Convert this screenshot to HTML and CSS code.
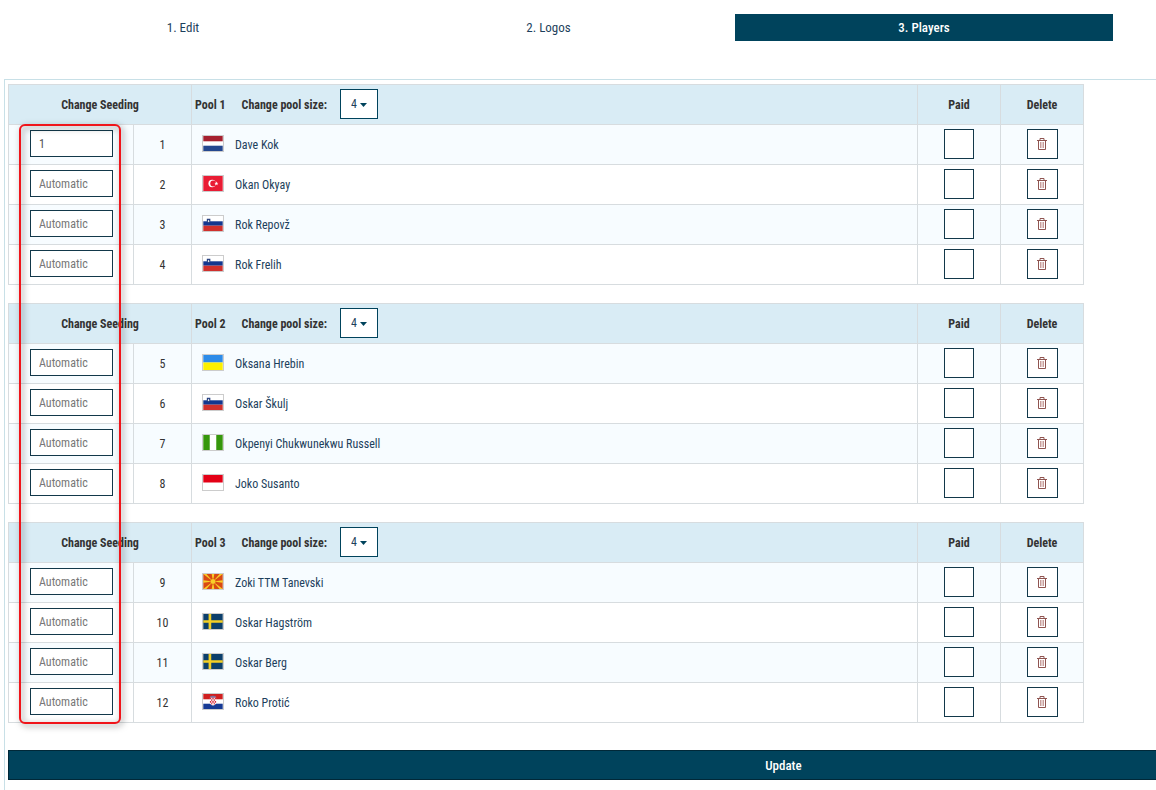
FILE: index.html
```html
<!DOCTYPE html>
<html lang="en">
<head>
<meta charset="utf-8">
<title>Players</title>
<link rel="stylesheet" href="styles.css">
</head>
<body>
<svg class="sprite" aria-hidden="true">
  <symbol id="nl" viewBox="0 0 22 17"><path fill="#fff" d="M0 0h22v17H0z"/><path fill="#a5202f" d="M0 0h22v6H0z"/><path fill="#24478f" d="M0 11h22v6H0z"/></symbol>
  <symbol id="tr" viewBox="0 0 22 17"><path fill="#e91c34" d="M0 0h22v17H0z"/><circle cx="10" cy="8.500" r="4.200" fill="#fff"/><circle cx="11.200" cy="8.500" r="3.300" fill="#e91c34"/><path fill="#fff" d="M14.800 6.200l.7 1.500 1.600.1-1.300 1 .5 1.600-1.500-.9-1.500.9.5-1.600-1.200-1 1.600-.1z"/></symbol>
  <symbol id="si" viewBox="0 0 22 17"><path fill="#fff" d="M0 0h22v17H0z"/><path fill="#12378f" d="M0 6h22v5H0z"/><path fill="#d0302c" d="M0 11h22v6H0z"/><path fill="#26407f" d="M4 3h4v3c0 1.500-1 2-2 2.500C5 8 4 7.500 4 6z"/><path fill="#fff" d="M5 6l1-1.800L7 6 6 7z"/></symbol>
  <symbol id="ua" viewBox="0 0 22 17"><path fill="#2d8be8" d="M0 0h22v8.500H0z"/><path fill="#fcf000" d="M0 8.500h22V17H0z"/></symbol>
  <symbol id="ng" viewBox="0 0 22 17"><path fill="#fff" d="M0 0h22v17H0z"/><path fill="#36970c" d="M0 0h7.300v17H0zM14.700 0H22v17h-7.300z"/></symbol>
  <symbol id="id" viewBox="0 0 22 17"><path fill="#fff" d="M0 0h22v17H0z"/><path fill="#e30016" d="M0 0h22v8.500H0z"/></symbol>
  <symbol id="mk" viewBox="0 0 22 17"><path fill="#d94a12" d="M0 0h22v17H0z"/><path fill="#f8cf28" d="M0 0h3.500L11 8.500zM22 0h-3.500L11 8.500zM0 17h3.500L11 8.500zM22 17h-3.500L11 8.500zM9.500 0h3L11 8.500zM9.500 17h3L11 8.500zM0 7v3l11-1.500zM22 7v3l-11-1.500z"/><circle cx="11" cy="8.500" r="3.200" fill="#f8cf28" stroke="#d94a12" stroke-width=".6"/></symbol>
  <symbol id="se" viewBox="0 0 22 17"><path fill="#0c3f6b" d="M0 0h22v17H0z"/><path fill="#f3cf25" d="M6 0h3v7h13v3H9v7H6v-7H0V7h6z"/></symbol>
  <symbol id="hr" viewBox="0 0 22 17"><path fill="#fff" d="M0 0h22v17H0z"/><path fill="#cf2020" d="M0 0h22v6H0z"/><path fill="#173a94" d="M0 11h22v6H0z"/><path fill="#fff" d="M7.500 4h7v5.500c0 2-1.500 3-3.500 3.500-2-.5-3.500-1.500-3.500-3.500z"/><path fill="#d6293a" d="M7.500 4H9v2H7.500zM10.200 4h1.600v2h-1.600zM13 4h1.500v2H13zM9 6h1.200v2H9zM11.800 6H13v2h-1.200zM7.500 8H9v2H7.500zM10.200 8h1.600v2h-1.600zM13 8h1.500v2H13zM9 10h1.200v2H9zM11.800 10H13v2h-1.200z"/><path fill="#6d7fb5" d="M8 2l1 .8 1-1 1 1 1-1 1 1 1-.8V4H8z"/></symbol>
  <symbol id="trash" viewBox="0 0 12 12"><path fill="none" stroke="#8f5450" d="M1 2.500h10M4 2.500v-2h4v2M2.500 3v8.500h7V3"/><path fill="none" stroke="#b98480" d="M4.500 4v6M6 4v6M7.500 4v6" stroke-width=".8"/></symbol>
  <symbol id="caret" viewBox="0 0 7 4"><path fill="#00435c" d="M0 0h7L3.500 4z"/></symbol>
</svg>
<nav class="steps">
  <a class="step" href="#edit">1. Edit</a>
  <a class="step" href="#logos">2. Logos</a>
  <a class="step active" href="#players" aria-current="step">3. Players</a>
</nav>
<form class="panel">
  <div class="pools">
    <table class="pool">
      <colgroup><col class="c-seed"><col class="c-num"><col><col class="c-act"><col class="c-act"></colgroup>
      <thead><tr><th colspan="2">Change Seeding</th><th class="head"><div class="bar"><span>Pool 1</span><label for="size1">Change pool size:</label><span class="pick"><select id="size1"><option>4</option></select><svg class="caret"><use href="#caret"/></svg></span></div></th><th>Paid</th><th>Delete</th></tr></thead>
      <tbody>
        <tr><td><input class="seed" type="text" value="1" placeholder="Automatic" aria-label="Seeding 1"></td><td>1</td><td class="name"><div class="player"><svg class="flag"><use href="#nl"/></svg><a href="#p1">Dave Kok</a></div></td><td><input class="paid" type="checkbox" aria-label="Paid 1"></td><td><button class="del" type="button" aria-label="Delete 1"><svg class="bin"><use href="#trash"/></svg></button></td></tr>
        <tr><td><input class="seed" type="text" placeholder="Automatic" aria-label="Seeding 2"></td><td>2</td><td class="name"><div class="player"><svg class="flag"><use href="#tr"/></svg><a href="#p2">Okan Okyay</a></div></td><td><input class="paid" type="checkbox" aria-label="Paid 2"></td><td><button class="del" type="button" aria-label="Delete 2"><svg class="bin"><use href="#trash"/></svg></button></td></tr>
        <tr><td><input class="seed" type="text" placeholder="Automatic" aria-label="Seeding 3"></td><td>3</td><td class="name"><div class="player"><svg class="flag"><use href="#si"/></svg><a href="#p3">Rok Repovž</a></div></td><td><input class="paid" type="checkbox" aria-label="Paid 3"></td><td><button class="del" type="button" aria-label="Delete 3"><svg class="bin"><use href="#trash"/></svg></button></td></tr>
        <tr><td><input class="seed" type="text" placeholder="Automatic" aria-label="Seeding 4"></td><td>4</td><td class="name"><div class="player"><svg class="flag"><use href="#si"/></svg><a href="#p4">Rok Frelih</a></div></td><td><input class="paid" type="checkbox" aria-label="Paid 4"></td><td><button class="del" type="button" aria-label="Delete 4"><svg class="bin"><use href="#trash"/></svg></button></td></tr>
      </tbody>
    </table>
    <table class="pool">
      <colgroup><col class="c-seed"><col class="c-num"><col><col class="c-act"><col class="c-act"></colgroup>
      <thead><tr><th colspan="2">Change Seeding</th><th class="head"><div class="bar"><span>Pool 2</span><label for="size2">Change pool size:</label><span class="pick"><select id="size2"><option>4</option></select><svg class="caret"><use href="#caret"/></svg></span></div></th><th>Paid</th><th>Delete</th></tr></thead>
      <tbody>
        <tr><td><input class="seed" type="text" placeholder="Automatic" aria-label="Seeding 5"></td><td>5</td><td class="name"><div class="player"><svg class="flag"><use href="#ua"/></svg><a href="#p5">Oksana Hrebin</a></div></td><td><input class="paid" type="checkbox" aria-label="Paid 5"></td><td><button class="del" type="button" aria-label="Delete 5"><svg class="bin"><use href="#trash"/></svg></button></td></tr>
        <tr><td><input class="seed" type="text" placeholder="Automatic" aria-label="Seeding 6"></td><td>6</td><td class="name"><div class="player"><svg class="flag"><use href="#si"/></svg><a href="#p6">Oskar Škulj</a></div></td><td><input class="paid" type="checkbox" aria-label="Paid 6"></td><td><button class="del" type="button" aria-label="Delete 6"><svg class="bin"><use href="#trash"/></svg></button></td></tr>
        <tr><td><input class="seed" type="text" placeholder="Automatic" aria-label="Seeding 7"></td><td>7</td><td class="name"><div class="player"><svg class="flag"><use href="#ng"/></svg><a href="#p7">Okpenyi Chukwunekwu Russell</a></div></td><td><input class="paid" type="checkbox" aria-label="Paid 7"></td><td><button class="del" type="button" aria-label="Delete 7"><svg class="bin"><use href="#trash"/></svg></button></td></tr>
        <tr><td><input class="seed" type="text" placeholder="Automatic" aria-label="Seeding 8"></td><td>8</td><td class="name"><div class="player"><svg class="flag"><use href="#id"/></svg><a href="#p8">Joko Susanto</a></div></td><td><input class="paid" type="checkbox" aria-label="Paid 8"></td><td><button class="del" type="button" aria-label="Delete 8"><svg class="bin"><use href="#trash"/></svg></button></td></tr>
      </tbody>
    </table>
    <table class="pool">
      <colgroup><col class="c-seed"><col class="c-num"><col><col class="c-act"><col class="c-act"></colgroup>
      <thead><tr><th colspan="2">Change Seeding</th><th class="head"><div class="bar"><span>Pool 3</span><label for="size3">Change pool size:</label><span class="pick"><select id="size3"><option>4</option></select><svg class="caret"><use href="#caret"/></svg></span></div></th><th>Paid</th><th>Delete</th></tr></thead>
      <tbody>
        <tr><td><input class="seed" type="text" placeholder="Automatic" aria-label="Seeding 9"></td><td>9</td><td class="name"><div class="player"><svg class="flag"><use href="#mk"/></svg><a href="#p9">Zoki TTM Tanevski</a></div></td><td><input class="paid" type="checkbox" aria-label="Paid 9"></td><td><button class="del" type="button" aria-label="Delete 9"><svg class="bin"><use href="#trash"/></svg></button></td></tr>
        <tr><td><input class="seed" type="text" placeholder="Automatic" aria-label="Seeding 10"></td><td>10</td><td class="name"><div class="player"><svg class="flag"><use href="#se"/></svg><a href="#p10">Oskar Hagström</a></div></td><td><input class="paid" type="checkbox" aria-label="Paid 10"></td><td><button class="del" type="button" aria-label="Delete 10"><svg class="bin"><use href="#trash"/></svg></button></td></tr>
        <tr><td><input class="seed" type="text" placeholder="Automatic" aria-label="Seeding 11"></td><td>11</td><td class="name"><div class="player"><svg class="flag"><use href="#se"/></svg><a href="#p11">Oskar Berg</a></div></td><td><input class="paid" type="checkbox" aria-label="Paid 11"></td><td><button class="del" type="button" aria-label="Delete 11"><svg class="bin"><use href="#trash"/></svg></button></td></tr>
        <tr><td><input class="seed" type="text" placeholder="Automatic" aria-label="Seeding 12"></td><td>12</td><td class="name"><div class="player"><svg class="flag"><use href="#hr"/></svg><a href="#p12">Roko Protić</a></div></td><td><input class="paid" type="checkbox" aria-label="Paid 12"></td><td><button class="del" type="button" aria-label="Delete 12"><svg class="bin"><use href="#trash"/></svg></button></td></tr>
      </tbody>
    </table>
    <div class="highlight"></div>
  </div>
  <button class="update" type="submit">Update</button>
</form>
</body>
</html>
```
FILE: styles.css
```css
* { box-sizing: border-box; }
body {
  margin: 0;
  background: #fff;
  color: #333;
  font-family: "Roboto Condensed", Roboto, sans-serif;
  font-size: 12px;
}
.sprite { display: none; }
input, button, select { font: inherit; }
a { color: #1d3f5c; text-decoration: none; }

.steps {
  display: grid;
  grid-template-columns: 358fr 373fr 378fr;
  padding: 14px 43px 0 4px;
}
.step { line-height: 27px; text-align: center; font-size: 13px; }
.active { background: #00435c; color: #fff; font-weight: 500; }

.panel {
  margin: 38px 0 0 4px;
  padding: 4px 0 10px 3px;
  border: solid #c8e0e7;
  border-width: 1px 0 0 1px;
}
.pools {
  position: relative;
  display: grid;
  gap: 18px;
  margin-right: 72px;
}
.pool {
  width: 100%;
  table-layout: fixed;
  border-collapse: collapse;
}
.c-seed { width: 125px; }
.c-num { width: 58px; }
.c-act { width: 83px; }
.pool th, .pool td {
  height: 40px;
  padding: 0;
  border: 1px solid #d7dcdf;
  text-align: center;
}
.pool th { background: #d9ecf5; font-weight: 700; }
.pool tbody tr:nth-child(odd) { background: #f7fcff; }
.pool input, .pool button { display: block; margin: 0 auto 2px; }

.bar { display: flex; align-items: center; padding-left: 3px; }
.bar label { margin: 0 13px 0 16px; }
.pick { position: relative; margin-bottom: 2px; }
.pick select {
  appearance: none;
  display: block;
  width: 38px;
  height: 30px;
  padding: 0 0 0 10px;
  border: 1px solid #00435c;
  border-radius: 0;
  background: #fff;
  color: #1d3f5c;
  font-weight: 400;
}
.caret {
  position: absolute;
  top: 14px;
  right: 11px;
  width: 7px;
  height: 4px;
  pointer-events: none;
}
.pool .seed {
  width: 83px;
  height: 27px;
  margin: 0 0 2px 21px;
  padding: 0 8px;
  border: 1px solid #12384a;
  background: #fff;
  color: #555;
}
.seed::placeholder { color: #777; }
.player { display: flex; align-items: center; gap: 11px; padding-left: 10px; }
.flag { width: 22px; height: 17px; margin-bottom: 3px; border: 1px solid #ccc; }
.paid {
  appearance: none;
  width: 30px;
  height: 30px;
  border: 1px solid #12384a;
  background: #fff;
}
.del {
  width: 31px;
  height: 30px;
  padding: 0;
  border: 1px solid #12384a;
  background: #fff;
}
.bin { display: block; width: 12px; height: 12px; margin: 0 auto; }

.highlight {
  position: absolute;
  top: 40px;
  bottom: -1px;
  left: 11px;
  width: 102px;
  border: 2px solid #f0141a;
  border-radius: 6px;
  filter: drop-shadow(2px 2px 3px rgba(0, 0, 0, 0.5));
  pointer-events: none;
}
.update {
  display: block;
  width: 100%;
  height: 30px;
  margin-top: 27px;
  padding: 0 0 0 35%;
  border: solid #002838;
  border-width: 1px 0 1px 1px;
  background: #00435c;
  color: #fff;
  font-size: 13px;
  font-weight: 500;
}
```
